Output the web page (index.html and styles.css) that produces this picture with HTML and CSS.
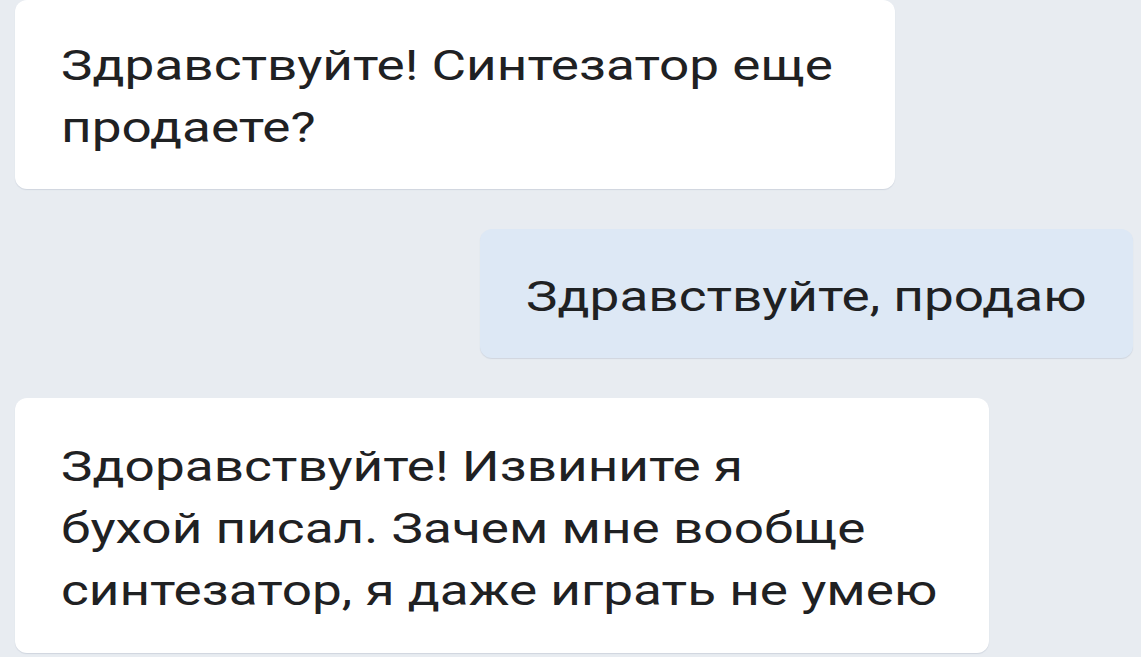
FILE: index.html
```html
<!DOCTYPE html>
<html lang="ru">
<head>
<meta charset="utf-8">
<title>Чат</title>
<link rel="stylesheet" href="styles.css">
</head>
<body>
<div class="chat">
  <div class="msg msg-in msg-first">
    <p class="text">Здравствуйте! Синтезатор еще<br>продаете?</p>
  </div>
  <div class="msg msg-out">
    <p class="text">Здравствуйте, продаю</p>
  </div>
  <div class="msg msg-in msg-third">
    <p class="text">Здоравствуйте! Извините я<br>бухой писал. Зачем мне вообще<br>синтезатор, я даже играть не умею</p>
  </div>
</div>
</body>
</html>
```

FILE: styles.css
```css
html, body {
  margin: 0;
  padding: 0;
  background: #e8ecf1;
  height: 100%;
  overflow: hidden;
}

.chat {
  display: flex;
  flex-direction: column;
  gap: 40px;
  padding: 0 8px 0 15px;
}

.msg {
  display: flex;
  align-items: flex-start;
  box-sizing: border-box;
  border-radius: 12px;
  padding: 35px 40px 30px 46px;
  box-shadow: 0 1px 1px rgba(60, 80, 110, 0.14);
}

.msg-in {
  align-self: flex-start;
  background: #ffffff;
}

.msg-first {
  width: 880px;
}

.msg-third {
  width: 974px;
  padding-top: 38px;
  padding-bottom: 31px;
}

.msg-out {
  align-self: flex-end;
  width: 653px;
  background: #dde8f5;
  padding-top: 37px;
  padding-bottom: 30px;
}

.text {
  flex: 0 0 auto;
  margin: 0;
  font-family: Roboto, "Noto Sans", sans-serif;
  font-size: 42px;
  line-height: 62px;
  color: #1f2123;
  white-space: nowrap;
  transform: scaleX(1.265);
  transform-origin: left center;
}
```
